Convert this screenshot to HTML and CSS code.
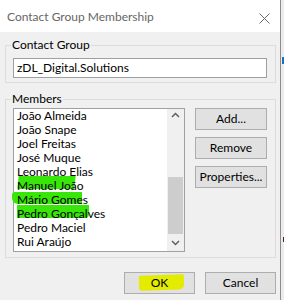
FILE: index.html
```html
<!DOCTYPE html>
<html>
<head>
<meta charset="utf-8">
<link rel="stylesheet" href="styles.css">
</head>
<body>
<div class="dialog">
  <div class="titlebar">
    <span class="title">Contact Group Membership</span>
    <svg class="close" width="11" height="11" viewBox="0 0 11 11"><path d="M0.5 0.5L10.5 10.5M10.5 0.5L0.5 10.5" stroke="#6a6a6a" stroke-width="1" fill="none"/></svg>
  </div>
  <div class="content">
    <fieldset class="group group-name">
      <legend>Contact Group</legend>
      <div class="textbox">zDL_Digital.Solutions</div>
    </fieldset>
    <fieldset class="group group-members">
      <legend>Members</legend>
      <div class="members-row">
        <div class="listbox">
          <ul class="items">
            <li>João Almeida</li>
            <li>João Snape</li>
            <li>Joel Freitas</li>
            <li>José Muque</li>
            <li>Leonardo Elias</li>
            <li class="hl hl1">Manuel João</li>
            <li class="hl hl2">Mário Gomes</li>
            <li class="hl hl3">Pedro Gonçalves</li>
            <li>Pedro Maciel</li>
            <li>Rui Araújo</li>
          </ul>
          <div class="scrollbar">
            <div class="arrow arrow-up"><svg width="9" height="6" viewBox="0 0 9 6"><path d="M1 5L4.5 1.5L8 5" stroke="#606060" stroke-width="1.5" fill="none"/></svg></div>
            <div class="track"><div class="thumb"></div></div>
            <div class="arrow arrow-down"><svg width="9" height="6" viewBox="0 0 9 6"><path d="M1 1L4.5 4.5L8 1" stroke="#606060" stroke-width="1.5" fill="none"/></svg></div>
          </div>
        </div>
        <div class="side-buttons">
          <div class="btn">Add...</div>
          <div class="btn">Remove</div>
          <div class="btn">Properties...</div>
        </div>
      </div>
    </fieldset>
    <div class="footer">
      <div class="btn btn-foot btn-ok"><span class="ok-text">OK</span></div>
      <div class="btn btn-foot">Cancel</div>
    </div>
  </div>
</div>
<div class="outside">
  <div class="mark-blue"></div>
  <div class="mark-red"></div>
</div>
</body>
</html>
```
FILE: styles.css
```css
html, body {
  margin: 0;
  padding: 0;
}
body {
  width: 284px;
  height: 300px;
  overflow: hidden;
  display: flex;
  background: #ececec;
  font-family: Lato, "Open Sans", sans-serif;
  font-size: 12px;
  color: #000;
}
.dialog {
  width: 280px;
  height: 300px;
  border-right: 1px solid #8c8c8c;
  background: #f0f0f0;
  display: flex;
  flex-direction: column;
  flex: none;
}
.titlebar {
  height: 32px;
  background: #fff;
  display: flex;
  align-items: center;
  justify-content: space-between;
  padding: 0 10px 0 7px;
  flex: none;
}
.title {
  font-size: 12px;
  color: #666;
  padding-top: 1px;
}
.close {
  display: block;
  margin-top: 4px;
}
.content {
  padding: 0 4px 0 5px;
}
.group {
  margin: 0;
  border: 1px solid #dcdcdc;
  padding: 6px 8px 4px 7px;
  min-width: 0;
}
.group legend {
  padding: 0 1px;
  margin-left: -2px;
  line-height: 14px;
  font-size: 12px;
}
.group-name {
  margin-top: 6px;
}
.group-members {
  margin-top: 9px;
  padding-top: 2px;
  padding-bottom: 5px;
}
.textbox {
  height: 18px;
  border: 1px solid #a0a0a0;
  background: #fff;
  line-height: 18px;
  padding-left: 3px;
}
.members-row {
  display: flex;
  align-items: flex-start;
}
.listbox {
  width: 170px;
  height: 142px;
  border: 1px solid #a0a0a0;
  background: #fff;
  display: flex;
  flex: none;
}
.items {
  list-style: none;
  margin: 0;
  padding: 0 0 0 3px;
  flex: 1;
}
.items li {
  line-height: 14px;
  height: 14px;
  white-space: nowrap;
  position: relative;
  z-index: 0;
}
.hl::before {
  content: "";
  position: absolute;
  z-index: -1;
  background: #39e60a;
}
.hl1::before {
  left: 1px;
  top: -3px;
  width: 57px;
  height: 13px;
  transform: skewX(-6deg);
}
.hl2::before {
  left: -5px;
  top: -1px;
  width: 70px;
  height: 12px;
  border-radius: 3px 0 0 6px;
}
.hl3::before {
  left: 0;
  top: -2px;
  width: 72px;
  height: 13px;
  border-radius: 0 0 4px 0;
}
.scrollbar {
  width: 17px;
  background: #f0f0f0;
  display: flex;
  flex-direction: column;
  flex: none;
}
.arrow {
  height: 17px;
  display: flex;
  justify-content: center;
  flex: none;
}
.arrow-up {
  align-items: flex-start;
  padding-top: 3px;
  height: 14px;
}
.arrow-down {
  align-items: center;
}
.arrow svg {
  display: block;
}
.track {
  flex: 1;
  display: flex;
  flex-direction: column;
  justify-content: flex-end;
}
.thumb {
  height: 57px;
  margin: 0 1px;
  background: #cdcdcd;
}
.side-buttons {
  display: flex;
  flex-direction: column;
  gap: 7px;
  margin-left: 10px;
  flex: 1;
}
.btn {
  height: 20px;
  border: 1px solid #adadad;
  background: #e1e1e1;
  display: flex;
  align-items: center;
  justify-content: center;
  line-height: 14px;
}
.footer {
  display: flex;
  justify-content: flex-end;
  gap: 10px;
  margin-top: 14px;
}
.btn-foot {
  width: 69px;
}
.ok-text {
  position: relative;
  z-index: 0;
}
.ok-text::before {
  content: "";
  position: absolute;
  z-index: -1;
  left: -12px;
  top: -1px;
  width: 45px;
  height: 15px;
  background: #e3eb00;
  border-radius: 2px 1px 5px 3px;
  transform: rotate(-2deg);
}
.outside {
  flex: 1;
  background: #ececec;
  display: flex;
  flex-direction: column;
}
.mark-blue {
  margin-top: 57px;
  height: 7px;
  margin-left: 1px;
  background: #1f6fbf;
}
.mark-red {
  margin-top: 173px;
  height: 5px;
  margin-left: 2px;
  background: #5a1a1a;
}
```
